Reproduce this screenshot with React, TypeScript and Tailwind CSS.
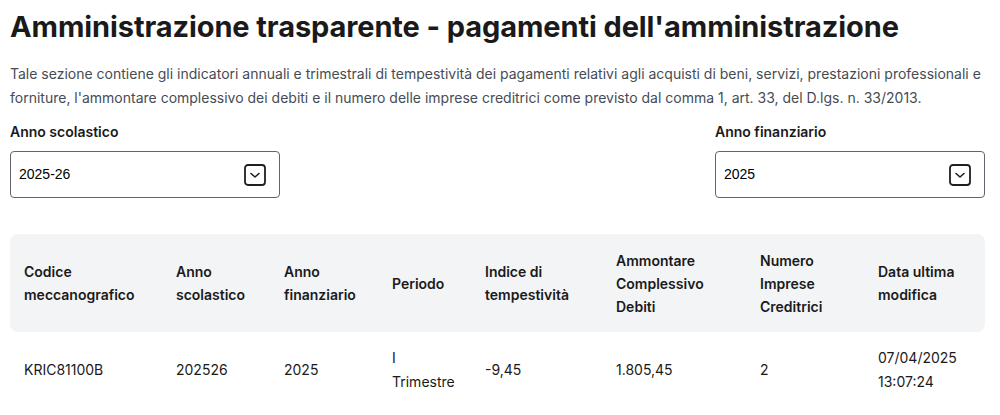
import React from "react";

const cols = [
  { label: ["Codice", "meccanografico"], w: "w-[152px]" },
  { label: ["Anno", "scolastico"], w: "w-[108px]" },
  { label: ["Anno", "finanziario"], w: "w-[108px]" },
  { label: ["Periodo"], w: "w-[93px]" },
  { label: ["Indice di", "tempestività"], w: "w-[131px]" },
  { label: ["Ammontare", "Complessivo", "Debiti"], w: "w-[144px]" },
  { label: ["Numero", "Imprese", "Creditrici"], w: "w-[118px]" },
  { label: ["Data ultima", "modifica"], w: "flex-1" },
];

const row = [
  ["KRIC81100B"],
  ["202526"],
  ["2025"],
  ["I", "Trimestre"],
  ["-9,45"],
  ["1.805,45"],
  ["2"],
  ["07/04/2025", "13:07:24"],
];

function ChevronBox() {
  return (
    <svg width="22" height="22" viewBox="0 0 22 22" fill="none">
      <rect x="1" y="1" width="20" height="20" rx="3" stroke="#1f1f1f" strokeWidth="1.8" />
      <path d="M7 9.5l4 3.5 4-3.5" stroke="#1f1f1f" strokeWidth="1.6" strokeLinecap="round" strokeLinejoin="round" />
    </svg>
  );
}

function Select({ label, value }: { label: string; value: string }) {
  return (
    <div className="w-[270px]">
      <div className="text-[14px] font-semibold text-[#1a1a1a] leading-[20px] mb-[9px]">{label}</div>
      <div className="h-[47px] border border-[#5f6670] rounded-[4px] flex items-center justify-between pl-[8px] pr-[13px]">
        <span className="text-[14px] text-black font-['Liberation_Sans',Arial,sans-serif]">{value}</span>
        <ChevronBox />
      </div>
    </div>
  );
}

export default function App() {
  return (
    <div className="bg-white w-[1000px] h-[415px] overflow-hidden px-[10px] pt-[8px] font-['Inter',sans-serif] text-[#1a1a1a]">
      <h1 className="text-[29px] font-bold leading-[38px] tracking-[-0.1px] text-[#1a1a1a]">
        Amministrazione trasparente - pagamenti dell'amministrazione
      </h1>
      <p className="mt-[16px] text-[14px] leading-[24px] text-[#464c55]">
        Tale sezione contiene gli indicatori annuali e trimestrali di tempestività dei pagamenti relativi agli acquisti di beni, servizi, prestazioni professionali e forniture, l'ammontare complessivo dei debiti e il numero delle imprese creditrici come previsto dal comma 1, art. 33, del D.lgs. n. 33/2013.
      </p>
      <div className="mt-[12px] flex justify-between pr-[5px]">
        <Select label="Anno scolastico" value="2025-26" />
        <Select label="Anno finanziario" value="2025" />
      </div>
      <div className="mt-[36px] w-[975px]">
        <div className="flex items-center h-[98px] bg-[#f3f4f6] rounded-[8px] pl-[14px]">
          {cols.map((c, i) => (
            <div key={i} className={`${c.w} text-[14px] font-semibold leading-[23px] text-[#1a1a1a]`}>
              {c.label.map((l, j) => (
                <div key={j}>{l}</div>
              ))}
            </div>
          ))}
        </div>
        <div className="flex items-center h-[76px] pl-[14px]">
          {row.map((cell, i) => (
            <div key={i} className={`${cols[i].w} text-[14px] leading-[24px] text-[#1a1a1a]`}>
              {cell.map((l, j) => (
                <div key={j}>{l}</div>
              ))}
            </div>
          ))}
        </div>
      </div>
    </div>
  );
}
